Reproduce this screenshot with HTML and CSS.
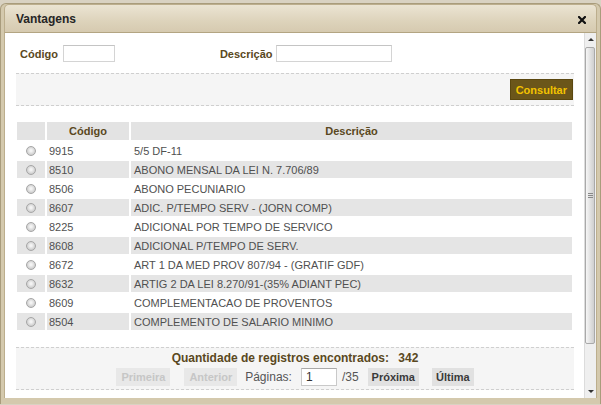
FILE: index.html
```html
<!DOCTYPE html>
<html lang="pt">
<head>
    <meta charset="UTF-8">
    <title>Vantagens</title>
    <link rel="stylesheet" href="styles.css">
</head>
<body>
    <div class="dialog">
        <div class="titlebar">
            <span class="title">Vantagens</span>
            <span class="close">
                <svg width="8" height="8" viewBox="0 0 8 8"><path d="M1 1 L7 7 M7 1 L1 7" stroke="#111" stroke-width="2.2" stroke-linecap="square"/></svg>
            </span>
        </div>
        <div class="frame">
            <div class="content">
                <div class="search-row">
                    <label class="lbl">Código</label>
                    <input type="text" class="field field-code">
                    <label class="lbl lbl-desc">Descrição</label>
                    <input type="text" class="field field-desc">
                </div>
                <div class="panel panel-actions">
                    <button class="btn-consultar">Consultar</button>
                </div>
                <table class="grid">
                    <tr>
                        <th class="col-sel"></th>
                        <th class="col-cod">Código</th>
                        <th>Descrição</th>
                    </tr>
                    <tr><td class="col-sel"><input type="radio" name="v"></td><td>9915</td><td>5/5 DF-11</td></tr>
                    <tr class="alt"><td class="col-sel"><input type="radio" name="v"></td><td>8510</td><td>ABONO MENSAL DA LEI N. 7.706/89</td></tr>
                    <tr><td class="col-sel"><input type="radio" name="v"></td><td>8506</td><td>ABONO PECUNIARIO</td></tr>
                    <tr class="alt"><td class="col-sel"><input type="radio" name="v"></td><td>8607</td><td>ADIC. P/TEMPO SERV - (JORN COMP)</td></tr>
                    <tr><td class="col-sel"><input type="radio" name="v"></td><td>8225</td><td>ADICIONAL POR TEMPO DE SERVICO</td></tr>
                    <tr class="alt"><td class="col-sel"><input type="radio" name="v"></td><td>8608</td><td>ADICIONAL P/TEMPO DE SERV.</td></tr>
                    <tr><td class="col-sel"><input type="radio" name="v"></td><td>8672</td><td>ART 1 DA MED PROV 807/94 - (GRATIF GDF)</td></tr>
                    <tr class="alt"><td class="col-sel"><input type="radio" name="v"></td><td>8632</td><td>ARTIG 2 DA LEI 8.270/91-(35% ADIANT PEC)</td></tr>
                    <tr><td class="col-sel"><input type="radio" name="v"></td><td>8609</td><td>COMPLEMENTACAO DE PROVENTOS</td></tr>
                    <tr class="alt"><td class="col-sel"><input type="radio" name="v"></td><td>8504</td><td>COMPLEMENTO DE SALARIO MINIMO</td></tr>
                </table>
                <div class="panel pager">
                    <div class="count">Quantidade de registros encontrados: <span class="total">342</span></div>
                    <div class="pager-row">
                        <button class="pg-btn disabled">Primeira</button>
                        <button class="pg-btn disabled btn-prev">Anterior</button>
                        <span class="pg-label">Páginas:</span>
                        <input type="text" class="pg-input" value="1">
                        <span class="pg-of">/35</span>
                        <button class="pg-btn btn-next">Próxima</button>
                        <button class="pg-btn btn-last">Última</button>
                    </div>
                </div>
            </div>
            <div class="scrollbar">
                <div class="sb-arrow"><span class="tri-up"></span></div>
                <div class="sb-thumb"><span class="grip"></span></div>
                <div class="sb-track"></div>
                <div class="sb-arrow"><span class="tri-down"></span></div>
            </div>
        </div>
    </div>
</body>
</html>
```

FILE: styles.css
```css
body {
    margin: 0;
    background: #d9d2c2;
    font-family: "Liberation Sans", Arial, sans-serif;
}

.dialog {
    width: 593px;
    margin-top: 3px;
    border: 1px solid #a99c7c;
    border-bottom: none;
    border-radius: 6px 6px 0 0;
    background: #d4c9ad;
    padding: 0 3px 6px 3px;
}

.titlebar {
    height: 27px;
    border: 1px solid #bcae8d;
    border-bottom-color: #b3a582;
    border-radius: 5px 5px 0 0;
    background: linear-gradient(to bottom, #ebe4d3, #ddd3bb 60%, #d6cab0);
    display: flex;
    align-items: center;
    justify-content: space-between;
    padding: 0 10px 0 11px;
}

.title {
    font-size: 12px;
    font-weight: bold;
    color: #262626;
    margin-top: 1px;
}

.close {
    display: flex;
    margin-top: 2px;
}

.frame {
    display: flex;
    height: 365px;
    border-left: 1px solid #bcae8d;
    border-right: 1px solid #bcae8d;
    background: #fff;
}

.content {
    flex: 1;
    padding: 12px 10px 0 11px;
}

.search-row {
    display: flex;
    align-items: center;
    margin-left: 4px;
    height: 17px;
}

.lbl {
    font-size: 11px;
    font-weight: bold;
    color: #5a4821;
    margin-right: 5px;
}

.lbl-desc {
    margin-left: 105px;
    margin-right: 4px;
}

.field {
    height: 17px;
    box-sizing: border-box;
    border: 1px solid #d4d4d4;
    border-top-color: #c4c4c4;
    padding: 0;
    margin: 0;
}

.field-code {
    width: 52px;
}

.field-desc {
    width: 116px;
}

.panel {
    background: #f5f5f5;
    border-top: 1px dashed #cfcfcf;
    border-bottom: 1px dashed #cfcfcf;
}

.panel-actions {
    margin-top: 11px;
    padding: 5px 1px 5px 0;
    display: flex;
    justify-content: flex-end;
}

.btn-consultar {
    height: 21px;
    padding: 0 5px;
    border: 1px solid #5a470f;
    background: #6b561a;
    color: #f3c300;
    font-family: "Liberation Sans", Arial, sans-serif;
    font-size: 11px;
    font-weight: bold;
}

.grid {
    margin: 14px 0 0 -1px;
    width: 559px;
    border-spacing: 2px;
    font-size: 11px;
    color: #505050;
}

.grid th {
    height: 18px;
    padding: 0;
    background: #e3e3e3;
    color: #5a4821;
    font-weight: bold;
    text-align: center;
}

.grid td {
    height: 17px;
    padding: 0 0 0 2px;
    text-align: left;
}

.grid td + td + td {
    padding-left: 3px;
}

.grid .col-sel {
    width: 28px;
    padding: 0;
    text-align: center;
}

.grid .col-cod {
    width: 82px;
}

.grid tr.alt td {
    background: #e5e5e5;
}

.grid input[type="radio"] {
    appearance: none;
    -webkit-appearance: none;
    width: 10px;
    height: 10px;
    margin: 0;
    vertical-align: middle;
    border: 1px solid #a6a6a6;
    border-radius: 50%;
    background: radial-gradient(circle at 50% 45%, #f4f4f4 15%, #c4c4c4 85%);
    position: relative;
    top: -1px;
}

.pager {
    margin-top: 15px;
    padding: 3px 0;
    text-align: center;
}

.count {
    height: 14px;
    line-height: 14px;
    font-size: 12px;
    font-weight: bold;
    color: #5a4821;
}

.total {
    margin-left: 6px;
}

.pager-row {
    margin-top: 2px;
    height: 19px;
    display: flex;
    justify-content: center;
    align-items: center;
    font-size: 12px;
    color: #555;
}

.pg-btn {
    height: 18px;
    padding: 0 4px;
    border: none;
    background: #e1e1e1;
    color: #3a3a3a;
    font-family: "Liberation Sans", Arial, sans-serif;
    font-size: 11px;
    font-weight: bold;
}

.pg-btn.disabled {
    background: #e8e8e8;
    color: #c6c6c6;
    padding: 0 5px;
}

.btn-prev {
    margin-left: 14px;
}

.pg-label {
    margin-left: 8px;
}

.pg-input {
    width: 36px;
    height: 18px;
    box-sizing: border-box;
    margin: 0 5px 0 9px;
    border: 1px solid #c9c9c9;
    border-top-color: #a9a9a9;
    padding: 0 4px;
    font-family: "Liberation Sans", Arial, sans-serif;
    font-size: 12px;
    color: #333;
}

.btn-next {
    margin-left: 9px;
}

.btn-last {
    margin-left: 13px;
}

.scrollbar {
    width: 14px;
    display: flex;
    flex-direction: column;
    background: #efefef;
    border-left: 1px solid #dcdcdc;
    box-sizing: border-box;
}

.sb-arrow {
    height: 13px;
    display: flex;
    align-items: center;
    justify-content: center;
}

.tri-up {
    width: 0;
    height: 0;
    border-left: 3px solid transparent;
    border-right: 3px solid transparent;
    border-bottom: 3px solid #333;
}

.tri-down {
    width: 0;
    height: 0;
    border-left: 3px solid transparent;
    border-right: 3px solid transparent;
    border-top: 3px solid #333;
}

.sb-thumb {
    height: 295px;
    margin: 1px 1px 0 0;
    border: 1px solid #a9a9a9;
    border-radius: 2px;
    background: linear-gradient(to right, #f6f6f6, #dedede 60%, #cfcfcf);
    display: flex;
    align-items: center;
    justify-content: center;
}

.grip {
    width: 5px;
    height: 5px;
    background: repeating-linear-gradient(to bottom, #888 0, #888 1px, transparent 1px, transparent 2px);
}

.sb-track {
    flex: 1;
}
```
